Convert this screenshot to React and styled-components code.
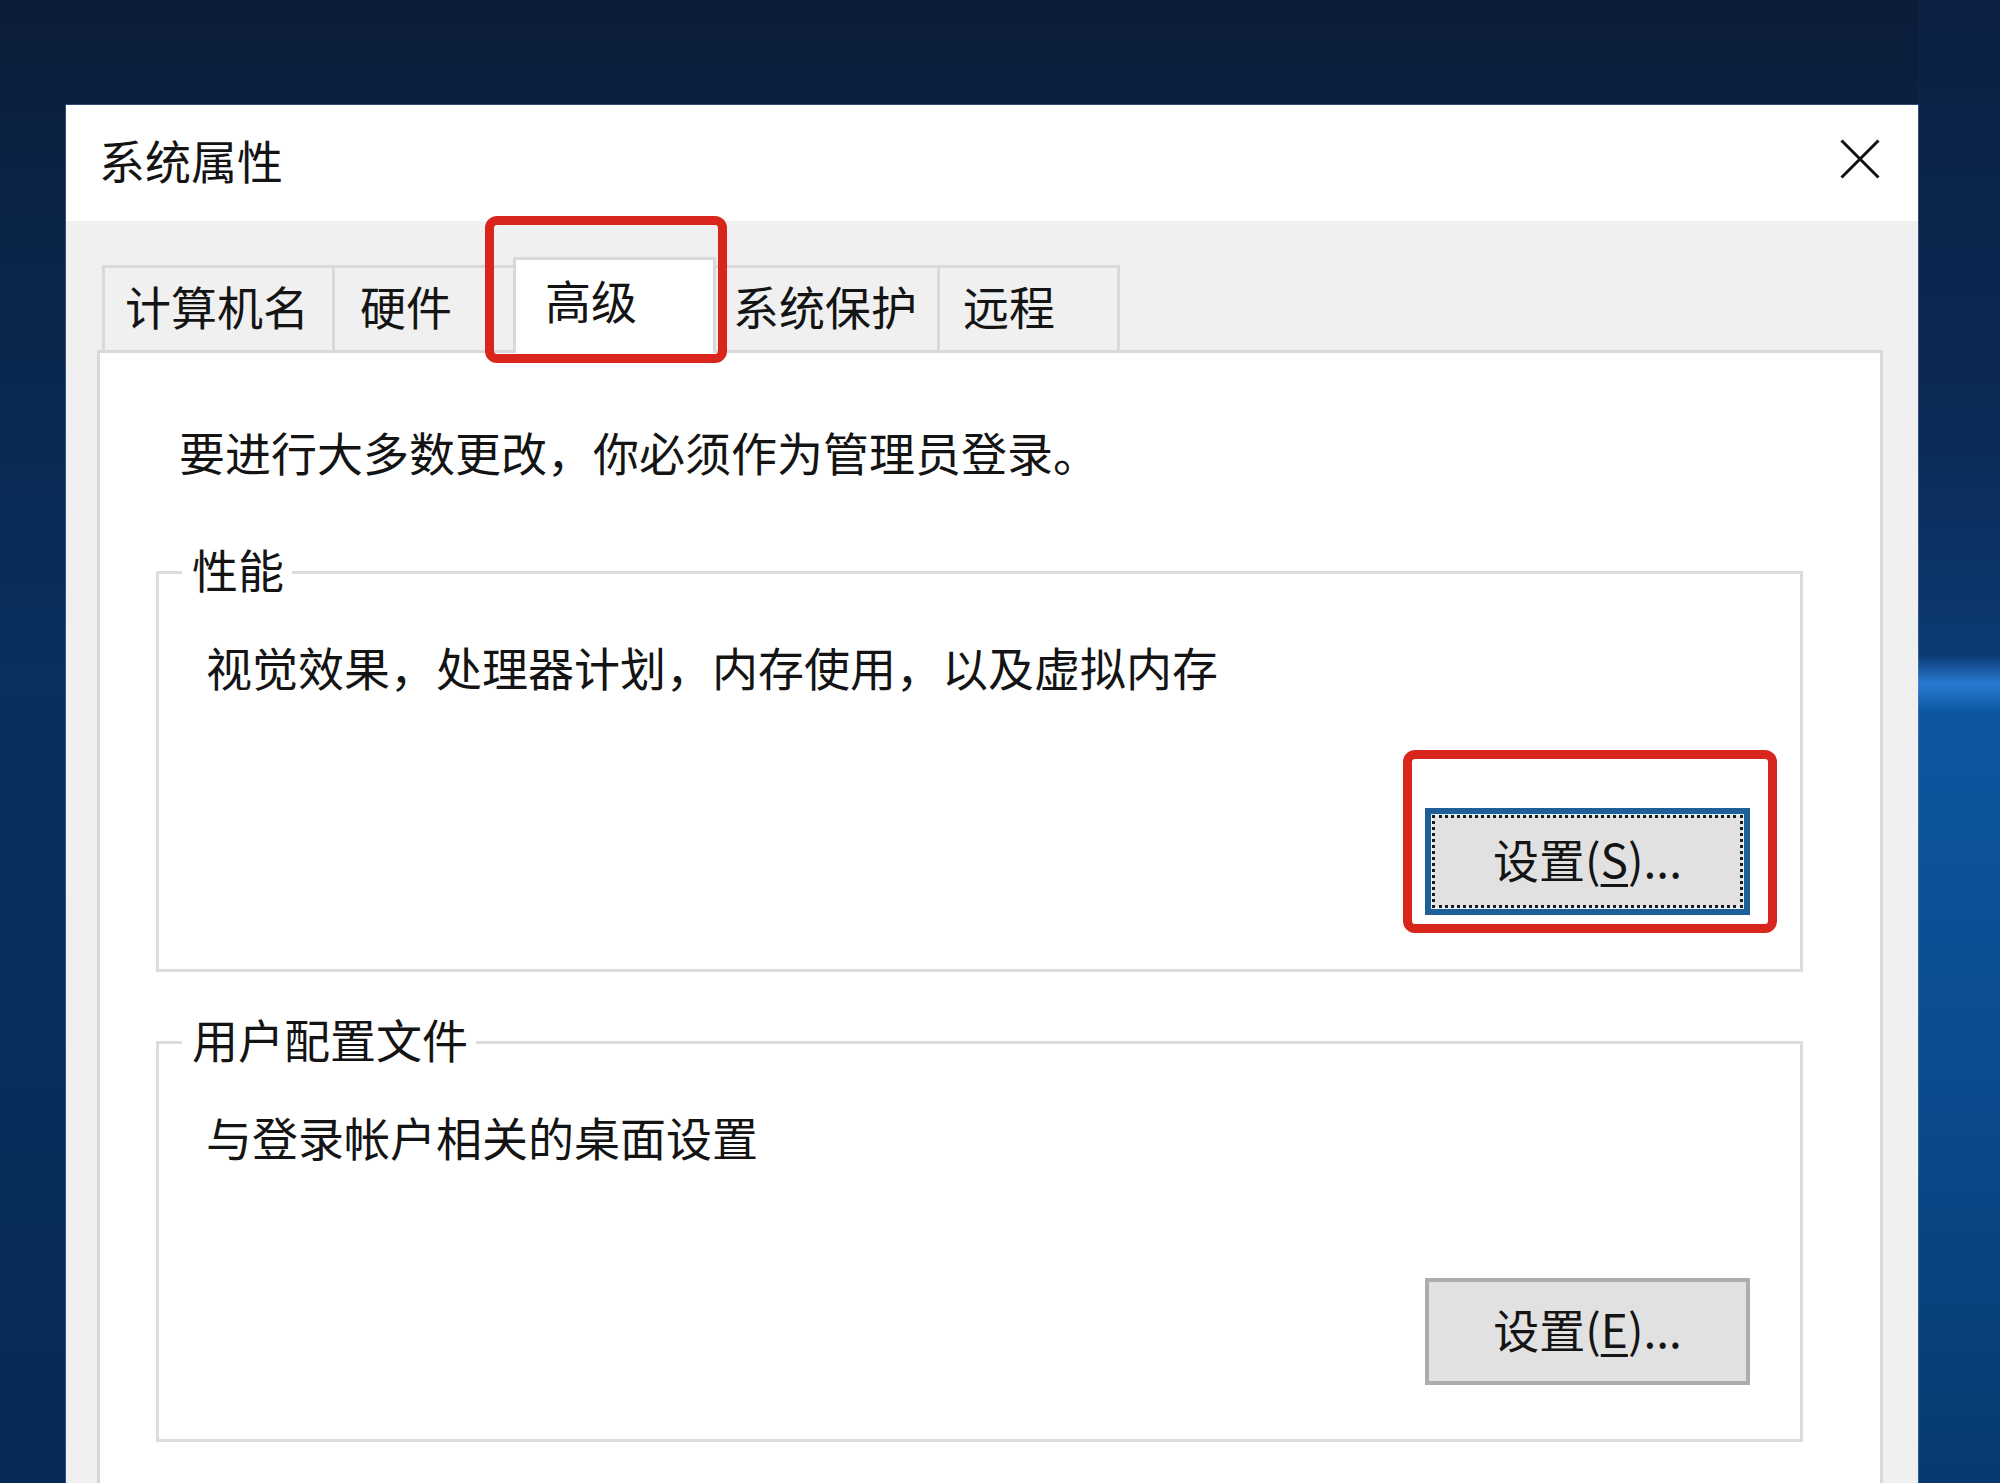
import React from "react";
import styled, { createGlobalStyle } from "styled-components";

const FONT = `"Noto Sans CJK SC", "Noto Sans", "Liberation Sans", sans-serif`;

const GlobalStyle = createGlobalStyle`
  html, body {
    margin: 0;
    padding: 0;
  }
  body {
    font-family: ${FONT};
  }
`;

const tabs = [
  { label: "计算机名", w: 230, pad: 20 },
  { label: "硬件", w: 189, pad: 25 },
  { label: "高级", w: 203, pad: 29, selected: true },
  { label: "系统保护", w: 229, pad: 22 },
  { label: "远程", w: 183, pad: 23, last: true },
];

const App = () => {
  return (
    <Desktop>
      <GlobalStyle />
      <Window>
        <TitleBar>
          <Title>系统属性</Title>
          <CloseButton viewBox="0 0 40 40" aria-label="关闭">
            <line x1="1.5" y1="1.5" x2="38.5" y2="38.5" />
            <line x1="38.5" y1="1.5" x2="1.5" y2="38.5" />
          </CloseButton>
        </TitleBar>

        <Body>
          <TabStrip>
            {tabs.map((t) => (
              <Tab
                key={t.label}
                $w={t.w}
                $pad={t.pad}
                $selected={t.selected}
                $last={t.last}
              >
                {t.label}
                {t.selected && (
                  <Highlight $t={44} $r={14} $b={10} $l={31} />
                )}
              </Tab>
            ))}
          </TabStrip>

          <Panel>
            <AdminNote>要进行大多数更改，你必须作为管理员登录。</AdminNote>

            <GroupBox $gap={57}>
              <Legend>性能</Legend>
              <GroupBody>
                <Description>视觉效果，处理器计划，内存使用，以及虚拟内存</Description>
                <ButtonRow>
                  <Marked>
                    <Button $focused>
                      设置(<u>S</u>)...
                    </Button>
                    <Highlight $t={58} $r={27} $b={18} $l={22} />
                  </Marked>
                </ButtonRow>
              </GroupBody>
            </GroupBox>

            <GroupBox $gap={40}>
              <Legend>用户配置文件</Legend>
              <GroupBody>
                <Description>与登录帐户相关的桌面设置</Description>
                <ButtonRow>
                  <Button>
                    设置(<u>E</u>)...
                  </Button>
                </ButtonRow>
              </GroupBody>
            </GroupBox>
          </Panel>
        </Body>
      </Window>
    </Desktop>
  );
};

export default App;

// Styled Components

const Desktop = styled.div`
  width: 2000px;
  height: 1483px;
  overflow: hidden;
  box-sizing: border-box;
  padding: 105px 82px 0 66px;
  font-family: ${FONT};
  background:
    linear-gradient(
        180deg,
        #0b2043 0px,
        #0b2a55 430px,
        #0b3a73 655px,
        #2a7ad2 684px,
        #0c579f 712px,
        #0a4a8c 1100px,
        #07396f 1483px
      )
      right top / 82px 100% no-repeat,
    linear-gradient(180deg, #0b1c38 0px, #0a2447 220px, #08305f 700px, #062a55 1483px);
`;

const Window = styled.div`
  height: 1420px;
  display: flex;
  flex-direction: column;
  background: #f0f0f0;
  box-shadow: 0 0 0 1px rgba(120, 160, 210, 0.35);
`;

const TitleBar = styled.div`
  height: 116px;
  flex: none;
  display: flex;
  align-items: center;
  justify-content: space-between;
  padding: 0 38px 0 33px;
  background: #ffffff;
`;

// text blocks keep a 60px box; the extra bottom padding lifts the CJK glyphs to the reference baseline
const Title = styled.div`
  font-size: 46px;
  line-height: 52px;
  padding-bottom: 8px;
  color: #141414;
`;

const CloseButton = styled.svg`
  width: 40px;
  height: 40px;
  margin-bottom: 8px;
  stroke: #111;
  stroke-width: 3;
  fill: none;
`;

const Body = styled.div`
  flex: 1;
  display: flex;
  flex-direction: column;
  padding: 36px 35px 0 31px;
  background: #f0f0f0;
`;

const TabStrip = styled.div`
  display: flex;
  align-items: flex-end;
  margin: 0 0 -3px 5px;
  position: relative;
  z-index: 1;
`;

const Tab = styled.div`
  box-sizing: border-box;
  width: ${(p) => p.$w}px;
  height: ${(p) => (p.$selected ? 96 : 85)}px;
  margin: ${(p) => (p.$selected ? "0 -8px" : "0 0 3px 0")};
  padding: 0 0 ${(p) => (p.$selected ? 16 : 9)}px ${(p) => p.$pad}px;
  display: flex;
  align-items: center;
  border: 3px solid #d9d9d9;
  border-bottom: none;
  border-right: ${(p) => (p.$selected || p.$last ? "3px solid #d9d9d9" : "none")};
  background: ${(p) => (p.$selected ? "#ffffff" : "#f0f0f0")};
  position: relative;
  z-index: ${(p) => (p.$selected ? 2 : 1)};
  font-size: 46px;
  line-height: 52px;
  color: #141414;
  white-space: nowrap;
`;

const Highlight = styled.span`
  position: absolute;
  top: -${(p) => p.$t}px;
  right: -${(p) => p.$r}px;
  bottom: -${(p) => p.$b}px;
  left: -${(p) => p.$l}px;
  border: 9px solid #d8261d;
  border-radius: 12px;
  pointer-events: none;
  z-index: 3;
`;

const Panel = styled.div`
  flex: 1;
  display: flex;
  flex-direction: column;
  background: #ffffff;
  border: 3px solid #d9d9d9;
  border-bottom: none;
`;

const AdminNote = styled.div`
  margin: 72px 0 0 79px;
  font-size: 46px;
  line-height: 52px;
  padding-bottom: 8px;
  color: #141414;
`;

const GroupBox = styled.fieldset`
  margin: ${(p) => p.$gap}px 77px 0 56px;
  padding: 0;
  min-width: 0;
  border: 3px solid #dcdcdc;
`;

const Legend = styled.legend`
  margin-left: 23px;
  padding: 0 8px 8px 10px;
  font-size: 46px;
  line-height: 52px;
  color: #141414;
`;

const GroupBody = styled.div`
  padding: 38px 50px 54px 47px;
`;

const Description = styled.div`
  font-size: 46px;
  line-height: 52px;
  padding-bottom: 8px;
  color: #141414;
`;

const ButtonRow = styled.div`
  display: flex;
  justify-content: flex-end;
  margin-top: 108px;
`;

const Marked = styled.div`
  position: relative;
  display: flex;
`;

const Button = styled.button`
  box-sizing: border-box;
  width: 325px;
  height: 107px;
  padding: 0 0 8px;
  display: flex;
  align-items: center;
  justify-content: center;
  font-family: ${FONT};
  font-size: 46px;
  line-height: 52px;
  color: #141414;
  background: #e1e1e1;
  border: ${(p) => (p.$focused ? "6px solid #1f5f97" : "4px solid #adadad")};
  box-shadow: ${(p) => (p.$focused ? "inset 0 0 0 2px #e3f2fc" : "none")};
  outline: ${(p) => (p.$focused ? "3px dotted #1b1b1b" : "none")};
  outline-offset: -10px;

  u {
    text-decoration-thickness: 3px;
    text-underline-offset: 6px;
  }
`;
